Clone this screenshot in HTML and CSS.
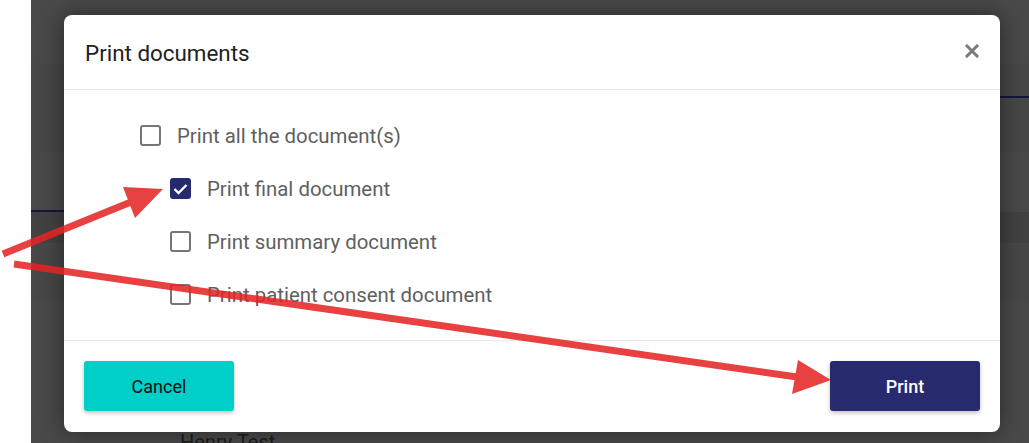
FILE: index.html
```html
<!DOCTYPE html>
<html lang="en">
<head>
<meta charset="utf-8">
<title>Print documents</title>
<link rel="stylesheet" href="styles.css">
</head>
<body>
<div class="page">
  <aside class="sidebar"></aside>
  <main class="main">
    <div class="band band-a"></div>
    <div class="band band-b"><div class="rule rule-right"></div></div>
    <div class="band band-c"><div class="rule rule-left"></div></div>
    <div class="band band-d"></div>
    <div class="band band-e"></div>
    <div class="band band-f"><span class="patient">Henry Test</span></div>
  </main>
</div>

<div class="modal" role="dialog" aria-labelledby="modal-title">
  <header class="modal-header">
    <h2 id="modal-title" class="modal-title">Print documents</h2>
    <button class="close" aria-label="Close">
      <svg width="14" height="14" viewBox="0 0 14 14"><path d="M2 2 L12 12 M12 2 L2 12" stroke="#7a7a7a" stroke-width="3" stroke-linecap="square"/></svg>
    </button>
  </header>
  <section class="modal-body">
    <label class="option">
      <span class="box"></span>
      <span class="label">Print all the document(s)</span>
    </label>
    <label class="option sub">
      <span class="box checked">
        <svg width="15" height="12" viewBox="0 0 15 12"><path d="M1.5 6 L5.5 10 L13.5 2" fill="none" stroke="#fff" stroke-width="2.4"/></svg>
      </span>
      <span class="label">Print final document</span>
    </label>
    <label class="option sub">
      <span class="box"></span>
      <span class="label">Print summary document</span>
    </label>
    <label class="option sub">
      <span class="box"></span>
      <span class="label">Print patient consent document</span>
    </label>
  </section>
  <footer class="modal-footer">
    <button class="btn btn-cancel">Cancel</button>
    <button class="btn btn-print">Print</button>
  </footer>
</div>

<svg class="arrows" width="1029" height="443" viewBox="0 0 1029 443">
  <g fill="#e52323" stroke="#e52323" opacity="0.86">
    <line x1="3" y1="254" x2="131" y2="202" stroke-width="7"/>
    <polygon points="123,187 163,189 135,218" stroke="none"/>
    <line x1="14" y1="264" x2="797" y2="377" stroke-width="7"/>
    <polygon points="798,360 831,380 792,394" stroke="none"/>
  </g>
</svg>
</body>
</html>
```

FILE: styles.css
```css
* { box-sizing: border-box; }

html, body {
  margin: 0;
  padding: 0;
  width: 1029px;
  height: 443px;
  overflow: hidden;
  font-family: Roboto, "Liberation Sans", Arial, sans-serif;
}

.page {
  display: flex;
  width: 1029px;
  height: 443px;
}

.sidebar {
  width: 31px;
  background: #ffffff;
}

.main {
  flex: 1;
  display: flex;
  flex-direction: column;
  background: #484848;
}

.band { position: relative; flex-shrink: 0; }
.band-a { height: 63px; background: #494949; }
.band-b { height: 90px; background: #474747; display: flex; justify-content: flex-end; padding-top: 33px; }
.band-c { height: 59px; background: #494949; display: flex; align-items: flex-end; }
.band-d { height: 31px; background: #424242; }
.band-e { height: 58px; background: #474747; }
.band-f { flex: 1 1 0; min-height: 0; overflow: hidden; background: #494949; padding: 131px 0 0 149px; }

.rule { height: 2px; background: #14163a; }
.rule-right { width: 29px; }
.rule-left { width: 33px; }

.patient {
  display: block;
  font-size: 20px;
  color: #1c1c1c;
  line-height: 20px;
}

.modal {
  position: absolute;
  left: 64px;
  top: 15px;
  width: 936px;
  height: 417px;
  background: #ffffff;
  border-radius: 8px;
  box-shadow: 0 0 24px rgba(0, 0, 0, 0.45);
  display: flex;
  flex-direction: column;
}

.modal-header {
  height: 75px;
  border-bottom: 1px solid #e8e8e8;
  display: flex;
  align-items: center;
  justify-content: space-between;
  padding: 0 21px 0 21px;
}

.modal-title {
  margin: 0;
  font-size: 22.4px;
  font-weight: 400;
  color: #212121;
  padding-top: 1px;
}

.close {
  border: 0;
  background: none;
  padding: 0;
  width: 14px;
  height: 14px;
  display: flex;
  margin-top: -3px;
}

.modal-body {
  height: 251px;
  border-bottom: 1px solid #e8e8e8;
  padding: 19px 0 0 76px;
  display: flex;
  flex-direction: column;
}

.option {
  height: 53px;
  display: flex;
  align-items: center;
  gap: 16px;
}

.option.sub { padding-left: 30px; }

.box {
  width: 21px;
  height: 21px;
  border: 2px solid #767676;
  border-radius: 3px;
  display: flex;
  align-items: center;
  justify-content: center;
  flex: none;
}

.box.checked {
  background: #272a6e;
  border-color: #272a6e;
}

.label {
  font-size: 20.4px;
  color: #606060;
}

.modal-footer {
  flex: 1;
  display: flex;
  justify-content: space-between;
  padding: 20px 20px 0 20px;
}

.btn {
  width: 150px;
  height: 50px;
  border: 0;
  border-radius: 3px;
  font-family: Roboto, "Liberation Sans", Arial, sans-serif;
  font-size: 18px;
  box-shadow: 0 2px 4px rgba(0, 0, 0, 0.25);
}

.btn-cancel {
  background: #00cec8;
  color: #111111;
}

.btn-print {
  background: #272a6e;
  color: #ffffff;
  font-weight: 500;
}

.arrows {
  position: absolute;
  left: 0;
  top: 0;
  pointer-events: none;
}
```
